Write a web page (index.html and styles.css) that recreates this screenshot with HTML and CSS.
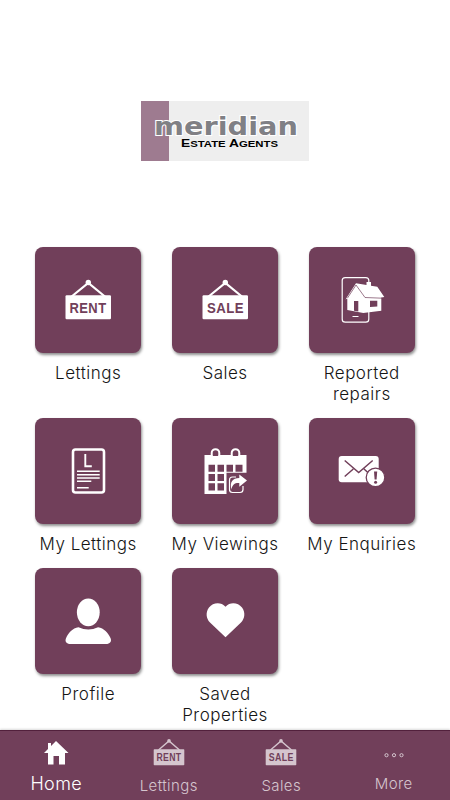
FILE: index.html
```html
<!DOCTYPE html>
<html lang="en">
<head>
  <meta charset="UTF-8">
  <meta name="viewport" content="width=device-width, initial-scale=1.0">
  <title>Meridian Estate Agents</title>
  <link rel="stylesheet" href="styles.css">
</head>
<body>
  <header>
    <svg class="logo" viewBox="0 0 168 60">
      <rect width="168" height="60" fill="#eeeeee"/>
      <rect width="28" height="60" fill="#9e7b90"/>
      <text class="brand" x="13" y="34" textLength="144" lengthAdjust="spacingAndGlyphs">meridian</text>
      <text class="tagline" x="40" y="45.500" textLength="97" lengthAdjust="spacingAndGlyphs">E<tspan class="small">STATE</tspan> A<tspan class="small">GENTS</tspan></text>
    </svg>
  </header>

  <main class="grid">
    <a class="item">
      <svg class="tile" viewBox="0 0 106 106">
        <path class="line" d="M36 50 53.3 36 70.500 50" stroke-width="2.200"/>
        <circle cx="53.300" cy="35.500" r="2.700"/>
        <rect x="30.500" y="48.300" width="45.500" height="24" rx="1.200"/>
        <text class="sign" x="34.500" y="66.300" textLength="37" lengthAdjust="spacingAndGlyphs">RENT</text>
      </svg>
      <span>Lettings</span>
    </a>
    <a class="item">
      <svg class="tile" viewBox="0 0 106 106">
        <path class="line" d="M36 50 53.3 36 70.500 50" stroke-width="2.200"/>
        <circle cx="53.300" cy="35.500" r="2.700"/>
        <rect x="30.500" y="48.300" width="45.500" height="24" rx="1.200"/>
        <text class="sign" x="35" y="66.300" textLength="37" lengthAdjust="spacingAndGlyphs">SALE</text>
      </svg>
      <span>Sales</span>
    </a>
    <a class="item">
      <svg class="tile" viewBox="0 0 106 106">
        <rect class="line" x="33.200" y="30.600" width="26.600" height="44.600" rx="3" stroke-width="1.200"/>
        <path class="line" d="M43.500 69.500h6" stroke-width="1.200"/>
        <path d="M36.500 52.500 47 36.300 57.500 38v-3h4.500v3.700l6.300 1L75.300 50l-3 .5v13.200l-18 2.200-16-3V51.500z"/>
        <path class="cut-line" d="M47 38 56 50.500l17 .7M47 38l-8.500 13" stroke-width=".7"/>
        <path class="cut" d="M45 54h4.300v10.500l-4.300-.7zM61 53.700h7.300v5.800l-7.300.4z"/>
      </svg>
      <span>Reported repairs</span>
    </a>
    <a class="item">
      <svg class="tile" viewBox="0 0 106 106">
        <rect class="line" x="38" y="31.500" width="31" height="43" rx="2.500" stroke-width="2.600"/>
        <path class="line" d="M50.300 36v12.300h6.500" stroke-width="1.900"/>
        <path class="line" d="M42 53.300h22.700M42 56.700h22.700M42 60h22.700M42 63.300h14.300M42 69.700h11.700" stroke-width="1.400"/>
      </svg>
      <span>My Lettings</span>
    </a>
    <a class="item">
      <svg class="tile" viewBox="0 0 106 106">
        <path d="M32.500 37h42v17.700h-20V76h-22z"/>
        <rect class="cut" x="40.500" y="35" width="6" height="4.500"/>
        <rect class="cut" x="60.500" y="35" width="6" height="4.500"/>
        <path class="line" d="M39.700 39v-4a3.800 3.800 0 0 1 7.600 0v4zM59.700 39v-4a3.800 3.800 0 0 1 7.600 0v4z" stroke-width="2"/>
        <path class="cut" d="M36.500 46.700H43v7h-6.500zM45.500 46.700H52v7h-6.500zM54.500 46.700H61v7h-6.500zM63.500 46.700h7v7h-7zM36.500 56H43v7h-6.500zM45.500 56H52v7h-6.500zM36.500 65.300H43v7.200h-6.500zM45.500 65.300H52v7.200h-6.500z"/>
        <path class="line" d="M64 59h-3.500q-3 0-3 3v9.500q0 3 3 3H68q3 0 3-3V68" stroke-width="1.200"/>
        <path d="M59.500 71.500C57.500 64 60.500 60 67.300 60v-3.500l7.700 6-7.700 6.200V65c-4.500-.3-7 1.500-7.800 6.500z"/>
      </svg>
      <span>My Viewings</span>
    </a>
    <a class="item">
      <svg class="tile" viewBox="0 0 106 106">
        <rect x="29.700" y="38" width="40" height="26.300" rx="3"/>
        <path class="cut-line" d="m35.700 42.500 14 12 14-12M35.700 58.500l8.600-7.500M55 51l5 4.500" stroke-width="1.500"/>
        <circle class="cut-line badge" cx="66.500" cy="59.400" r="9.300" stroke-width="1.300"/>
        <path class="cut" d="M65 53.500h3.200l-.6 8h-2z"/>
        <circle class="cut" cx="66.600" cy="64.200" r="1.500"/>
      </svg>
      <span>My Enquiries</span>
    </a>
    <a class="item">
      <svg class="tile" viewBox="0 0 106 106">
        <ellipse cx="53.300" cy="44.300" rx="11.400" ry="13.900"/>
        <path d="M43.500 59.300q9.800 4.500 19.600 0C69 60 73 65 75.500 70c1.500 3.500-.5 6-4.500 6H35.500c-4 0-6-2.500-4.400-6C33.500 65 37.500 60 43.500 59.300z"/>
      </svg>
      <span>Profile</span>
    </a>
    <a class="item">
      <svg class="tile" viewBox="0 0 106 106">
        <path d="M53.500 69.300 38 54.500c-4-4-4.500-10.500-1-15 4-5.300 12-6 16.500-.8 4.500-5.200 12.500-4.500 16.500.8 3.500 4.500 3 11-1 15z"/>
      </svg>
      <span>Saved Properties</span>
    </a>
  </main>

  <nav class="tabs">
    <a class="tab active">
      <svg viewBox="0 0 32 28"><path d="M16 2 28.500 14H25v11.500h-6V17h-5.500v8.500H8V14H4l4-4V4h3v3z"/></svg>
      <span>Home</span>
    </a>
    <a class="tab">
      <svg viewBox="0 0 32 28">
        <path class="line" d="M5.500 11 16 2l10.500 9" stroke-width="1.400"/>
        <circle cx="16" cy="1.900" r="1.800"/>
        <rect x=".7" y="10.200" width="30.600" height="16" rx=".7"/>
        <text class="sign" x="3.500" y="22.300" textLength="25" lengthAdjust="spacingAndGlyphs">RENT</text>
      </svg>
      <span>Lettings</span>
    </a>
    <a class="tab">
      <svg viewBox="0 0 32 28">
        <path class="line" d="M5.500 11 16 2l10.500 9" stroke-width="1.400"/>
        <circle cx="16" cy="1.900" r="1.800"/>
        <rect x=".7" y="10.200" width="30.600" height="16" rx=".7"/>
        <text class="sign" x="3.700" y="22.300" textLength="25" lengthAdjust="spacingAndGlyphs">SALE</text>
      </svg>
      <span>Sales</span>
    </a>
    <a class="tab more">
      <svg viewBox="0 0 32 28">
        <g class="line" stroke-width="1"><circle cx="8.500" cy="16.200" r="1.600"/><circle cx="16" cy="16.200" r="1.600"/><circle cx="23.500" cy="16.200" r="1.600"/></g>
      </svg>
      <span>More</span>
    </a>
  </nav>
</body>
</html>
```

FILE: styles.css
```css
* {
  box-sizing: border-box;
}
body {
  margin: 0;
  height: 100vh;
  display: flex;
  flex-direction: column;
  background: #fff;
  font-family: Inter, 'Open Sans', sans-serif;
  font-weight: 300;
  overflow: hidden;
}
header {
  flex: none;
  height: 247px;
  padding-top: 101px;
  text-align: center;
}
.logo {
  width: 168px;
  height: 60px;
}
.brand {
  font: bold 25px 'DejaVu Sans', sans-serif;
  fill: #808085;
  stroke: #fff;
  stroke-width: 2px;
  paint-order: stroke;
}
.tagline {
  font: bold 11.5px 'Liberation Sans', sans-serif;
  fill: #000;
}
.small {
  font-size: 9.5px;
}
.grid {
  flex: 1;
  min-height: 0;
  display: grid;
  grid-template-columns: repeat(3, 136.8px);
  align-content: start;
  justify-content: center;
}
.item {
  display: flex;
  flex-direction: column;
  align-items: center;
  padding-bottom: 13px;
  font-size: 17px;
  line-height: 21px;
  letter-spacing: 0.5px;
  text-align: center;
  color: #151515;
}
.item span {
  width: 114px;
}
.tile {
  flex: none;
  width: 106px;
  height: 106px;
  margin-bottom: 10px;
  border-radius: 8px;
  background: #713f5a;
  box-shadow: 1px 2px 3px rgba(0, 0, 0, 0.45);
  fill: #fff;
  color: #fff;
}
.line {
  fill: none;
  stroke: currentColor;
}
.cut,
.sign {
  fill: #713f5a;
}
.cut-line {
  fill: none;
  stroke: #713f5a;
}
.badge {
  fill: #fff;
}
.sign {
  font: bold 15px 'Liberation Sans', sans-serif;
}
.tabs {
  flex: none;
  height: 70px;
  display: grid;
  grid-template-columns: repeat(4, 1fr);
  background: #713f5a;
  border-top: 1px solid #52203c;
  box-shadow: 0 -1px 2px rgba(0, 0, 0, 0.15);
}
.tab {
  display: flex;
  flex-direction: column;
  align-items: center;
  padding-top: 8px;
  font-size: 15px;
  line-height: 20px;
  letter-spacing: 0.4px;
  color: #d5c5ce;
}
.tab svg {
  width: 32px;
  height: 28px;
  margin-bottom: 9px;
  fill: currentColor;
}
.tab .line {
  fill: none;
}
.tab .sign {
  font-size: 10px;
  fill: #713f5a;
}
.active {
  font-size: 18px;
  color: #fff;
}
.active svg,
.more svg {
  margin-bottom: 7px;
}
```
